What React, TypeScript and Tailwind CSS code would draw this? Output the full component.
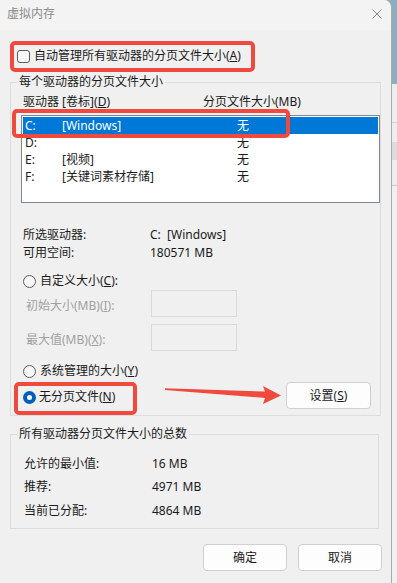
import type { ReactNode } from "react";

// Windows "虚拟内存" dialog with red annotation overlay

function Radio({ checked }: { checked?: boolean }) {
  if (checked) {
    return (
      <span className="flex h-[13px] w-[13px] shrink-0 items-center justify-center rounded-full bg-[#005fb8]">
        <span className="h-[5px] w-[5px] rounded-full bg-white" />
      </span>
    );
  }
  return <span className="h-[13px] w-[13px] shrink-0 rounded-full border border-[#5c5c5c] bg-[#f7f7f7]" />;
}

function Group({ title, children, className }: { title: string; children: ReactNode; className?: string }) {
  return (
    <fieldset className={`w-[369px] border border-[#dcdcdc] ${className ?? ""}`}>
      <legend className="ml-[6px] px-[2px] text-[12px] leading-[16px] text-[#1a1a1a]">{title}</legend>
      {children}
    </fieldset>
  );
}

const drives = [
  { d: "C:", label: "[Windows]", size: "无", selected: true },
  { d: "D:", label: "", size: "无" },
  { d: "E:", label: "[视频]", size: "无" },
  { d: "F:", label: "[关键词素材存储]", size: "无" },
];

export default function App() {
  return (
    <div className="relative flex h-[583px] w-[397px] bg-[#8eaebf] font-['Noto_Sans','Noto_Sans_CJK_SC',sans-serif] text-[12px] leading-[16px] text-[#1a1a1a]">
      <div className="flex h-full w-[392px] flex-col overflow-hidden rounded-tr-[8px] border-r border-[#a9a9a9] bg-[#f0f0f0]">
        {/* title bar */}
        <div className="flex h-[30px] items-start justify-between bg-[#f3f3f3] pl-[7px] pr-[9px] pt-[6px]">
          <span className="text-[#8a8a8a]">虚拟内存</span>
          <svg width="10" height="10" viewBox="0 0 10 10" className="mt-[3px]">
            <path d="M0.5 0.5L9.5 9.5M9.5 0.5L0.5 9.5" stroke="#8a8a8a" strokeWidth="1" />
          </svg>
        </div>

        <div className="flex flex-col px-[10px]">
          <div className="ml-[7px] mt-[18px] flex h-[16px] items-center gap-[4px]">
            <span className="h-[13px] w-[13px] rounded-[3px] border border-[#5a5a5a] bg-[#f8f8f8]" />
            <span>自动管理所有驱动器的分页文件大小(<u>A</u>)</span>
          </div>

          <Group title="每个驱动器的分页文件大小" className="mt-[10px] pb-[6px]">
            <div className="ml-[12px] mt-[4px] flex">
              <span className="w-[180px]">驱动器 [卷标](<u>D</u>)</span>
              <span>分页文件大小(MB)</span>
            </div>
            <div className="ml-[10px] mt-[5px] h-[88px] w-[359px] border border-[#828790] bg-white p-[1px]">
              {drives.map((r) => (
                <div
                  key={r.d}
                  className={`flex h-[17px] items-center pl-[2px] ${r.selected ? "bg-[#0078d7] text-white" : ""}`}
                >
                  <span className="w-[37px]">{r.d}</span>
                  <span className="w-[175px]">{r.label}</span>
                  <span>{r.size}</span>
                </div>
              ))}
            </div>

            <div className="ml-[12px] mt-[23px] flex leading-[18px]">
              <span className="w-[127px]">所选驱动器:</span>
              <span>C:&nbsp;&nbsp;[Windows]</span>
            </div>
            <div className="ml-[12px] flex leading-[18px]">
              <span className="w-[127px]">可用空间:</span>
              <span>180571 MB</span>
            </div>

            <div className="ml-[12px] mt-[11px] flex h-[16px] items-center gap-[4px]">
              <Radio />
              <span>自定义大小(<u>C</u>):</span>
            </div>
            <div className="ml-[15px] mt-[1px] flex h-[27px] items-center">
              <span className="mt-[5px] w-[125px] text-[#a0a0a0]">初始大小(MB)(<u>I</u>):</span>
              <span className="h-[27px] w-[86px] border border-[#dadada]" />
            </div>
            <div className="ml-[15px] mt-[7px] flex h-[27px] items-center">
              <span className="mt-[5px] w-[125px] text-[#a0a0a0]">最大值(MB)(<u>X</u>):</span>
              <span className="h-[27px] w-[86px] border border-[#dadada]" />
            </div>

            <div className="ml-[12px] mt-[12px] flex h-[16px] items-center gap-[4px]">
              <Radio />
              <span>系统管理的大小(<u>Y</u>)</span>
            </div>
            <div className="ml-[12px] mr-[9px] mt-[3px] flex h-[27px] items-center">
              <div className="mt-[3px] flex items-center gap-[3px]">
                <Radio checked />
                <span>无分页文件(<u>N</u>)</span>
              </div>
              <button className="ml-auto h-[27px] w-[85px] rounded-[4px] border border-[#d0d0d0] bg-[#fdfdfd]">
                设置(<u>S</u>)
              </button>
            </div>
          </Group>

          <Group title="所有驱动器分页文件大小的总数" className="mt-[10px] pb-[9px]">
            <div className="ml-[13px] mt-[14px] flex">
              <span className="w-[128px]">允许的最小值:</span>
              <span>16 MB</span>
            </div>
            <div className="ml-[13px] mt-[7px] flex">
              <span className="w-[128px]">推荐:</span>
              <span>4971 MB</span>
            </div>
            <div className="ml-[13px] mt-[8px] flex">
              <span className="w-[128px]">当前已分配:</span>
              <span>4864 MB</span>
            </div>
          </Group>

          <div className="-mr-[1px] mt-[15px] flex justify-end gap-[11px]">
            <button className="h-[27px] w-[84px] rounded-[4px] border border-[#d0d0d0] bg-[#fdfdfd]">确定</button>
            <button className="h-[27px] w-[84px] rounded-[4px] border border-[#d0d0d0] bg-[#fdfdfd]">取消</button>
          </div>
        </div>
      </div>

      {/* sliver of the window behind */}
      <div className="flex flex-1 flex-col">
        <div className="h-[84px]" />
        <div className="flex flex-1 flex-col bg-[#ededed]">
          <div className="mt-[38px] h-px bg-[#cfcfcf]" />
          <div className="mt-[19px] h-[18px] bg-[#dcdcdc]" />
          <div className="mt-[25px] h-px bg-[#c8c8c8]" />
          <div className="flex-1 bg-[#f0f0f0]" />
        </div>
      </div>

      {/* red annotations */}
      <svg className="pointer-events-none absolute inset-0" width="397" height="583" viewBox="0 0 397 583">
        <g fill="none" stroke="#ef4a3d" strokeWidth="4">
          <rect x="12" y="43" width="241" height="27" rx="3" />
          <rect x="14" y="111" width="274" height="25" rx="3" />
          <rect x="16" y="384" width="119" height="29" rx="3" />
        </g>
        <polygon
          fill="#ef4a3d"
          points="165,388.3 265,391.5 263,386 281,395.5 263,404 265,398 165,390"
        />
      </svg>
    </div>
  );
}
